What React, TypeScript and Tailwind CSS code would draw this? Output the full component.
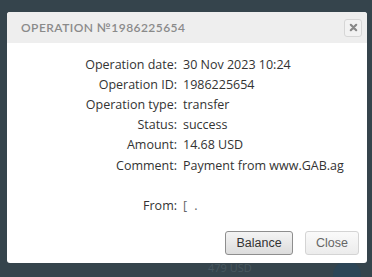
import React from 'react'

const rows: [string, string][] = [
    ['Operation date:', '30 Nov 2023 10:24'],
    ['Operation ID:', '1986225654'],
    ['Operation type:', 'transfer'],
    ['Status:', 'success'],
    ['Amount:', '14.68 USD'],
    ['Comment:', 'Payment from www.GAB.ag'],
]

const App = () => {
    return (
        <div className="relative w-[372px] h-[277px] overflow-hidden bg-[#35444c]">
            {/* page behind the dialog */}
            <div className="absolute left-[208px] top-[262px] text-[11px] leading-[12px] text-[#47575f] font-['Open_Sans',sans-serif]">479 USD</div>
            <div className="absolute left-[333px] top-[261px] w-[28px] h-[28px] rounded-full bg-[#2c4556]" />

            {/* Dialog */}
            <div className="absolute left-[7px] top-[12px] w-[360px] h-[251px] bg-white rounded-[3px] flex flex-col overflow-hidden">
                <div className="h-[31px] bg-[#eeeeee] flex items-center justify-between pl-[14px] pr-[5px]">
                    <span className="text-[12px] tracking-[0.45px] text-[#8a8a8a] font-['Lato',sans-serif] font-semibold">
                        OPERATION №1986225654
                    </span>
                    <button className="w-[18px] h-[18px] border border-[#d6d6d6] rounded-[3px] bg-[#f2f2f2] flex items-center justify-center">
                        <svg width="9" height="9" viewBox="0 0 10 10">
                            <path d="M2 2 L8 8 M8 2 L2 8" stroke="#888" strokeWidth="2.4" strokeLinecap="round" />
                        </svg>
                    </button>
                </div>

                <div className="flex-1 flex flex-col pt-[12px] font-['Open_Sans',sans-serif] text-[12.5px] text-[#333]">
                    {rows.map(([label, value]) => (
                        <div key={label} className="flex h-[20.2px] items-center">
                            <div className="w-[170px] text-right">{label}</div>
                            <div className="pl-[6px]">{value}</div>
                        </div>
                    ))}
                    <div className="flex h-[20px] items-center mt-[20px]">
                        <div className="w-[170px] text-right">From:</div>
                        <div className="pl-[6px] text-[#666]">
                            [ <span className="ml-[4px]">.</span>
                        </div>
                    </div>

                    <div className="flex justify-end gap-[12px] pr-[8px] mt-[15px] font-['Liberation_Sans',sans-serif] text-[12.5px]">
                        <button className="w-[68px] h-[24px] rounded-[3px] border border-[#8e8e8e] bg-gradient-to-b from-[#f4f4f4] to-[#dcdcdc] text-[#333]">
                            Balance
                        </button>
                        <button className="w-[54px] h-[24px] rounded-[3px] border border-[#d4d4d4] bg-gradient-to-b from-[#fafafa] to-[#ececec] text-[#666]">
                            Close
                        </button>
                    </div>
                </div>
            </div>
        </div>
    )
}

export default App
